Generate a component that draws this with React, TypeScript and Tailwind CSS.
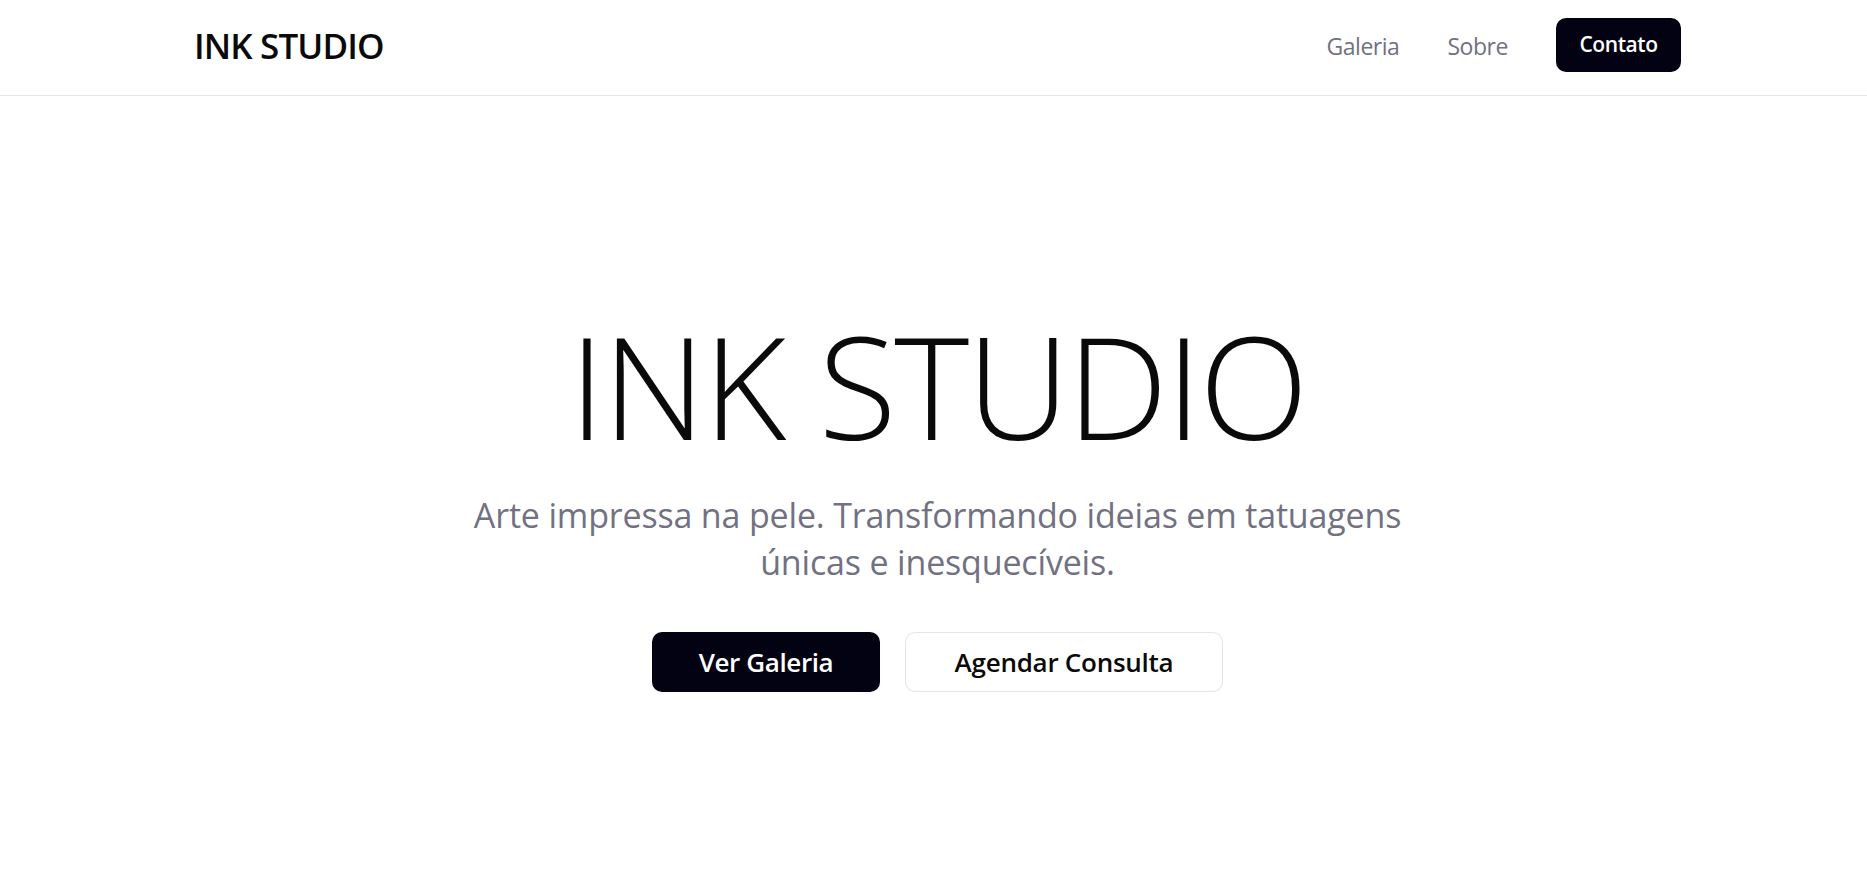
import React from "react";

const FONT = { fontFamily: '"Open Sans", "Noto Sans", sans-serif' };

function Header() {
  return (
    <header className="border-b border-black/10 bg-white pl-[8px]">
      <div className="mx-auto flex h-[95px] w-[1487px] items-start justify-between pt-[18px]">
        <div className="flex h-[54px] items-center pt-[2px]">
          <a href="#" className="text-[35px] font-semibold tracking-[-0.025em] text-[#0a0a0a]">
            INK STUDIO
          </a>
        </div>
        <nav className="flex h-[54px] items-center gap-12">
          <a href="#galeria" className="pt-[2px] text-[23px] tracking-[-0.02em] text-[#717182]">
            Galeria
          </a>
          <a href="#sobre" className="pt-[2px] text-[23px] tracking-[-0.02em] text-[#717182]">
            Sobre
          </a>
          <button className="flex h-[54px] w-[125px] items-center justify-center rounded-[10px] bg-[#030213] text-[21px] font-semibold tracking-[-0.02em] text-white">
            Contato
          </button>
        </nav>
      </div>
    </header>
  );
}

function Hero() {
  return (
    <section className="flex flex-col items-center pt-[217px] pl-[8px] text-center">
      <h1 className="text-[143px] leading-none font-[350] tracking-[-0.017em] text-[#0a0a0a]">
        INK STUDIO
      </h1>
      <p className="mt-[36px] max-w-[990px] text-[34px] leading-[47px] tracking-[-0.005em] text-[#717182]">
        Arte impressa na pele. Transformando ideias em tatuagens únicas e inesquecíveis.
      </p>
      <div className="mt-[46px] flex gap-[25px]">
        <button className="flex h-[60px] w-[228px] items-center justify-center rounded-[10px] bg-[#030213] text-[26px] font-semibold tracking-[-0.015em] text-white">
          Ver Galeria
        </button>
        <button className="flex h-[60px] w-[318px] items-center justify-center rounded-[10px] border border-black/10 bg-white text-[26px] font-semibold tracking-[-0.01em] text-[#0a0a0a]">
          Agendar Consulta
        </button>
      </div>
    </section>
  );
}

export default function App() {
  return (
    <div className="min-h-screen bg-white" style={FONT}>
      <Header />
      <Hero />
    </div>
  );
}
